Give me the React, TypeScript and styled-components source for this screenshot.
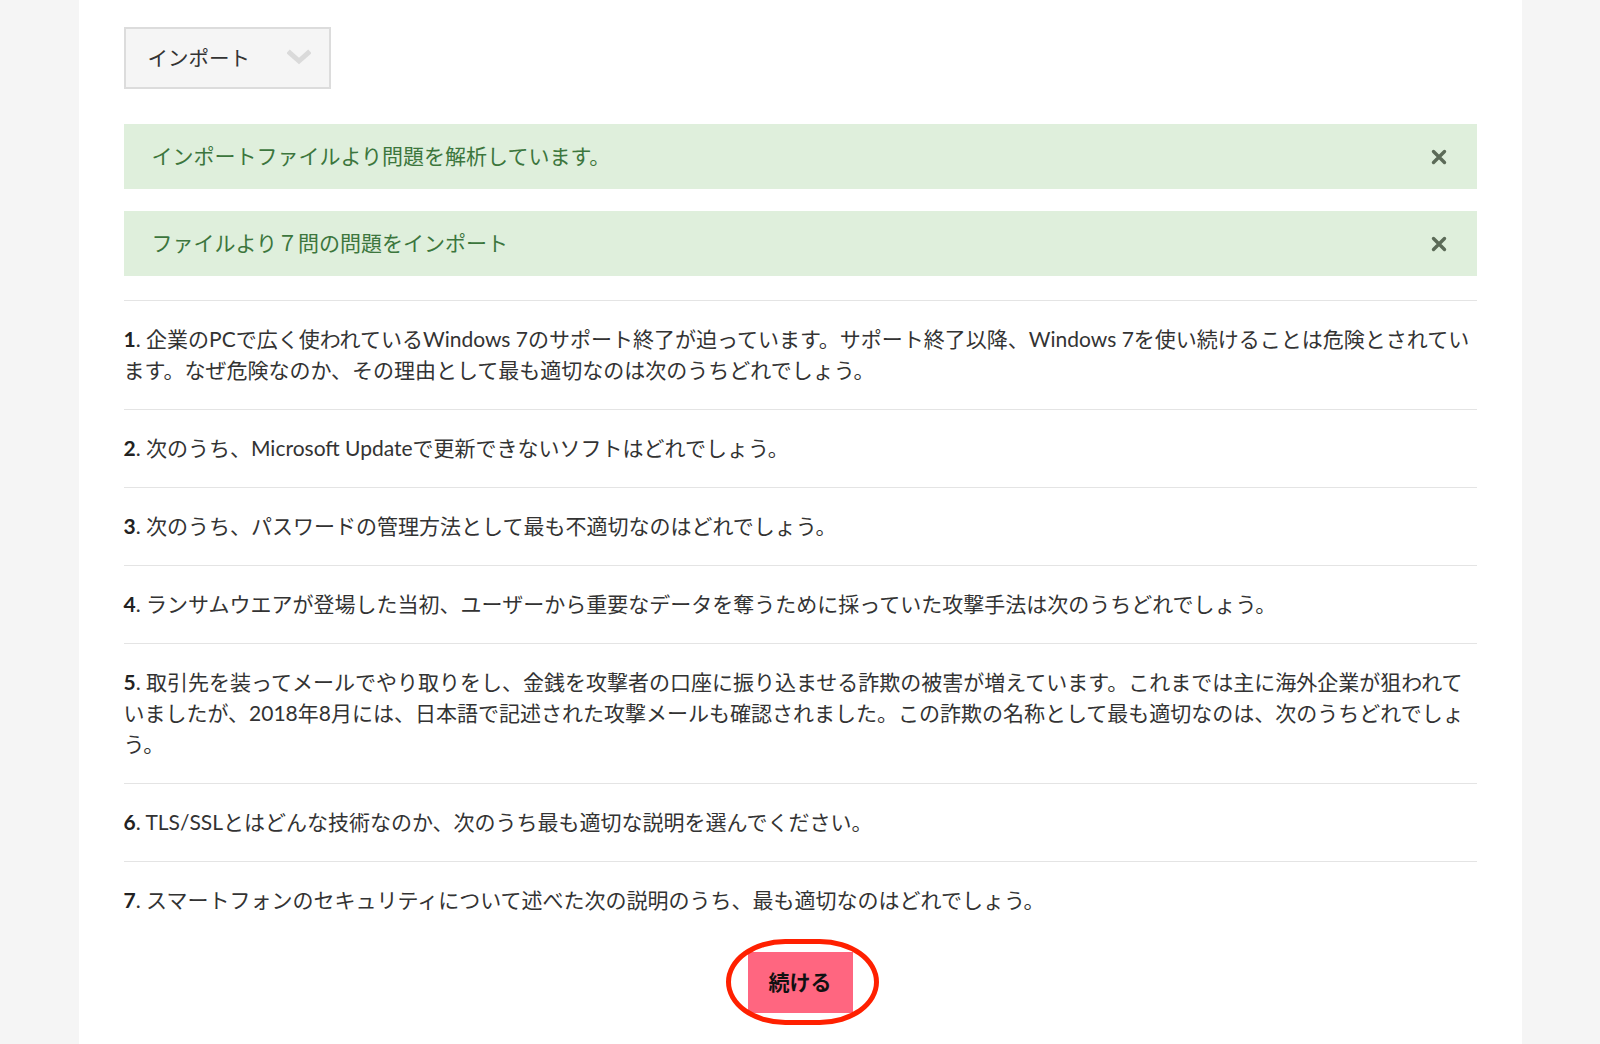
import React from "react";
import styled, { createGlobalStyle } from "styled-components";

const GlobalStyle = createGlobalStyle`
  html, body {
    margin: 0;
    padding: 0;
    background: #f5f5f5;
  }
  body {
    font-family: Lato, "Noto Sans CJK JP", sans-serif;
    color: #333;
  }
  * { box-sizing: border-box; }
`;

const Page = styled.div`
  min-height: 100vh;
  display: flex;
  justify-content: center;
`;

const Panel = styled.main`
  width: 1443px;
  min-height: 100vh;
  background: #ffffff;
  padding: 27px 45px 0 45px;
  display: flex;
  flex-direction: column;
`;

const Dropdown = styled.button`
  align-self: flex-start;
  width: 207px;
  height: 62px;
  background: #f5f5f5;
  border: 2px solid #dcdcdc;
  padding: 0 18px 2px 22px;
  display: flex;
  align-items: center;
  justify-content: space-between;
  font-family: Lato, "Noto Sans CJK JP", sans-serif;
  font-size: 20.5px;
  color: #333;
  cursor: pointer;
`;

const Alerts = styled.div`
  margin-top: 35px;
  display: flex;
  flex-direction: column;
  gap: 22px;
`;

const Alert = styled.div`
  height: 65px;
  background: #dfefdc;
  color: #3c763d;
  display: flex;
  align-items: center;
  justify-content: space-between;
  padding: 0 27px 3px 28px;
  font-size: 21px;
`;

const CloseButton = styled.button`
  width: 22px;
  height: 22px;
  padding: 0;
  margin-top: 3px;
  border: none;
  background: transparent;
  display: flex;
  align-items: center;
  justify-content: center;
  cursor: pointer;
  color: #5c6b58;
`;

const QuestionList = styled.ol`
  list-style: none;
  margin: 24px 0 0 0;
  padding: 0;
`;

const QuestionRow = styled.li`
  border-top: 1px solid #e4e4e4;
  padding: 22px 0 24px 0;
  font-size: 21px;
  line-height: 31px;
  color: #333;
`;

const Num = styled.strong`
  font-weight: 700;
  color: #222;
`;

const Actions = styled.div`
  display: flex;
  justify-content: center;
  padding-top: 13px;
`;

const Highlight = styled.div`
  position: relative;
`;

const Ring = styled.span`
  position: absolute;
  left: -22px;
  right: -26px;
  top: -13px;
  bottom: -12px;
  border: 5px solid #ff2000;
  border-radius: 62px / 45px;
  pointer-events: none;
`;

const ContinueButton = styled.button`
  width: 105px;
  height: 61px;
  border: none;
  background: #ff6680;
  color: #111;
  font-family: Lato, "Noto Sans CJK JP", sans-serif;
  font-size: 21px;
  font-weight: 700;
  padding: 0 0 3px 0;
  cursor: pointer;
`;

const Chevron = () => (
  <svg width="24" height="16" viewBox="0 0 24 16" aria-hidden="true">
    <path d="M3 4 L12 12 L21 4" fill="none" stroke="#dadada" strokeWidth="5" strokeLinecap="square" />
  </svg>
);

const CloseIcon = () => (
  <svg width="16" height="16" viewBox="0 0 16 16" aria-hidden="true">
    <path d="M2.5 2.5 L13.5 13.5 M13.5 2.5 L2.5 13.5" stroke="currentColor" strokeWidth="3.4" strokeLinecap="round" />
  </svg>
);

const alerts = [
  "インポートファイルより問題を解析しています。",
  "ファイルより７問の問題をインポート",
];

const questions = [
  "企業のPCで広く使われているWindows 7のサポート終了が迫っています。サポート終了以降、Windows 7を使い続けることは危険とされています。なぜ危険なのか、その理由として最も適切なのは次のうちどれでしょう。",
  "次のうち、Microsoft Updateで更新できないソフトはどれでしょう。",
  "次のうち、パスワードの管理方法として最も不適切なのはどれでしょう。",
  "ランサムウエアが登場した当初、ユーザーから重要なデータを奪うために採っていた攻撃手法は次のうちどれでしょう。",
  "取引先を装ってメールでやり取りをし、金銭を攻撃者の口座に振り込ませる詐欺の被害が増えています。これまでは主に海外企業が狙われていましたが、2018年8月には、日本語で記述された攻撃メールも確認されました。この詐欺の名称として最も適切なのは、次のうちどれでしょう。",
  "TLS/SSLとはどんな技術なのか、次のうち最も適切な説明を選んでください。",
  "スマートフォンのセキュリティについて述べた次の説明のうち、最も適切なのはどれでしょう。",
];

export default function App() {
  return (
    <>
      <GlobalStyle />
      <Page>
        <Panel>
          <Dropdown type="button">
            <span>インポート</span>
            <Chevron />
          </Dropdown>
          <Alerts>
            {alerts.map((text) => (
              <Alert key={text}>
                <span>{text}</span>
                <CloseButton type="button" aria-label="閉じる">
                  <CloseIcon />
                </CloseButton>
              </Alert>
            ))}
          </Alerts>
          <QuestionList>
            {questions.map((q, i) => (
              <QuestionRow key={i}>
                <Num>{i + 1}</Num>. {q}
              </QuestionRow>
            ))}
          </QuestionList>
          <Actions>
            <Highlight>
              <ContinueButton type="button">続ける</ContinueButton>
              <Ring />
            </Highlight>
          </Actions>
        </Panel>
      </Page>
    </>
  );
}
